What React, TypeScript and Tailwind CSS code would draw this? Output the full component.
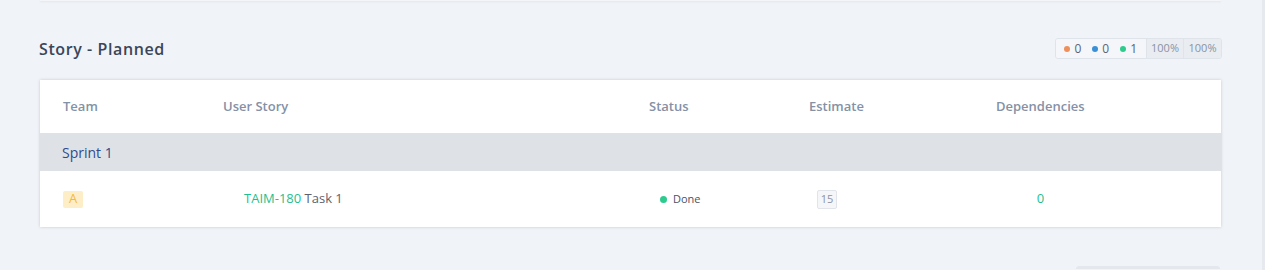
import React from "react";

const cols = "grid grid-cols-[160px_426px_160px_187px_89px]";

export default function App() {
  return (
    <div
      className="relative h-[270px] w-[1265px] overflow-hidden bg-[#f0f3f8]"
      style={{ fontFamily: "'Open Sans', 'Noto Sans', sans-serif" }}
    >
      {/* scrollbar strip */}
      <div className="absolute right-0 top-0 h-full w-[3px] bg-[#e6e9ee]" />

      <div className="w-[1181px] ml-[40px]">
        {/* bottom of previous card */}
        <div className="h-[1px] bg-[#f3f5f9] shadow-[0_1px_2px_rgba(0,0,0,0.08)]" />

        {/* section header */}
        <div className="mt-[37px] flex items-center justify-between h-[21px]">
          <h2 className="ml-[-1px] text-[16px] font-semibold text-[#3b4558] tracking-[0.6px]">Story - Planned</h2>
          <div className="flex h-[21px] items-stretch rounded-[3px] border border-[#dfe3ea] overflow-hidden mr-[-1px]">
            <div className="flex items-center gap-[11px] bg-[#f4f6f9] pl-[8px] pr-[9px] text-[12px] text-[#5b6374]">
              <span className="flex items-center gap-[4px]"><span className="h-[6px] w-[6px] rounded-full bg-[#ee8f5c]" />0</span>
              <span className="flex items-center gap-[4px]"><span className="h-[6px] w-[6px] rounded-full bg-[#3a8fd6]" />0</span>
              <span className="flex items-center gap-[4px]"><span className="h-[6px] w-[6px] rounded-full bg-[#2ecb8f]" />1</span>
            </div>
            <div className="flex w-[37px] items-center justify-center border-l border-[#dfe3ea] bg-[#e9ecf1] text-[11px] text-[#8a93a3]">100%</div>
            <div className="flex w-[38px] items-center justify-center border-l border-[#dfe3ea] bg-[#e9ecf1] text-[11px] text-[#8a93a3]">100%</div>
          </div>
        </div>

        {/* table card */}
        <div className="mt-[21px] bg-white shadow-[0_0_3px_rgba(0,0,0,0.18)]">
          <div className={`${cols} h-[53px] items-center pl-[23px] text-[13px] font-semibold text-[#8491a6]`}>
            <div>Team</div>
            <div>User Story</div>
            <div>Status</div>
            <div>Estimate</div>
            <div>Dependencies</div>
          </div>
          <div className="flex h-[38px] items-center bg-[#dee2e7] pl-[22px] text-[14px] text-[#2f4b8c]">Sprint 1</div>
          <div className={`${cols} h-[56px] items-center pl-[23px] text-[13px]`}>
            <div>
              <span className="inline-flex h-[17px] w-[20px] items-center justify-center rounded-[2px] bg-[#fdeec8] text-[13px] text-[#f6b93b]">A</span>
            </div>
            <div className="pl-[21px]">
              <span className="text-[#1ebf93]">TAIM-180</span> <span className="text-[#5a6272]">Task 1</span>
            </div>
            <div className="flex items-center gap-[6px] pl-[11px] text-[11px] text-[#4a5263]">
              <span className="h-[7px] w-[7px] rounded-full bg-[#2ecb8f]" />Done
            </div>
            <div className="pl-[8px]">
              <span className="inline-flex h-[19px] w-[20px] items-center justify-center rounded-[2px] border border-[#e1e4ea] bg-[#f5f6f8] text-[11px] text-[#8a93a3]">15</span>
            </div>
            <div className="text-center text-[13px] text-[#1ebf93]">0</div>
          </div>
        </div>

        {/* top of next element */}
        <div className="mt-[39px] ml-[1036px] mr-[1px] h-[3px] rounded-t-[3px] bg-[#e4e7ec]" />
      </div>
    </div>
  );
}
